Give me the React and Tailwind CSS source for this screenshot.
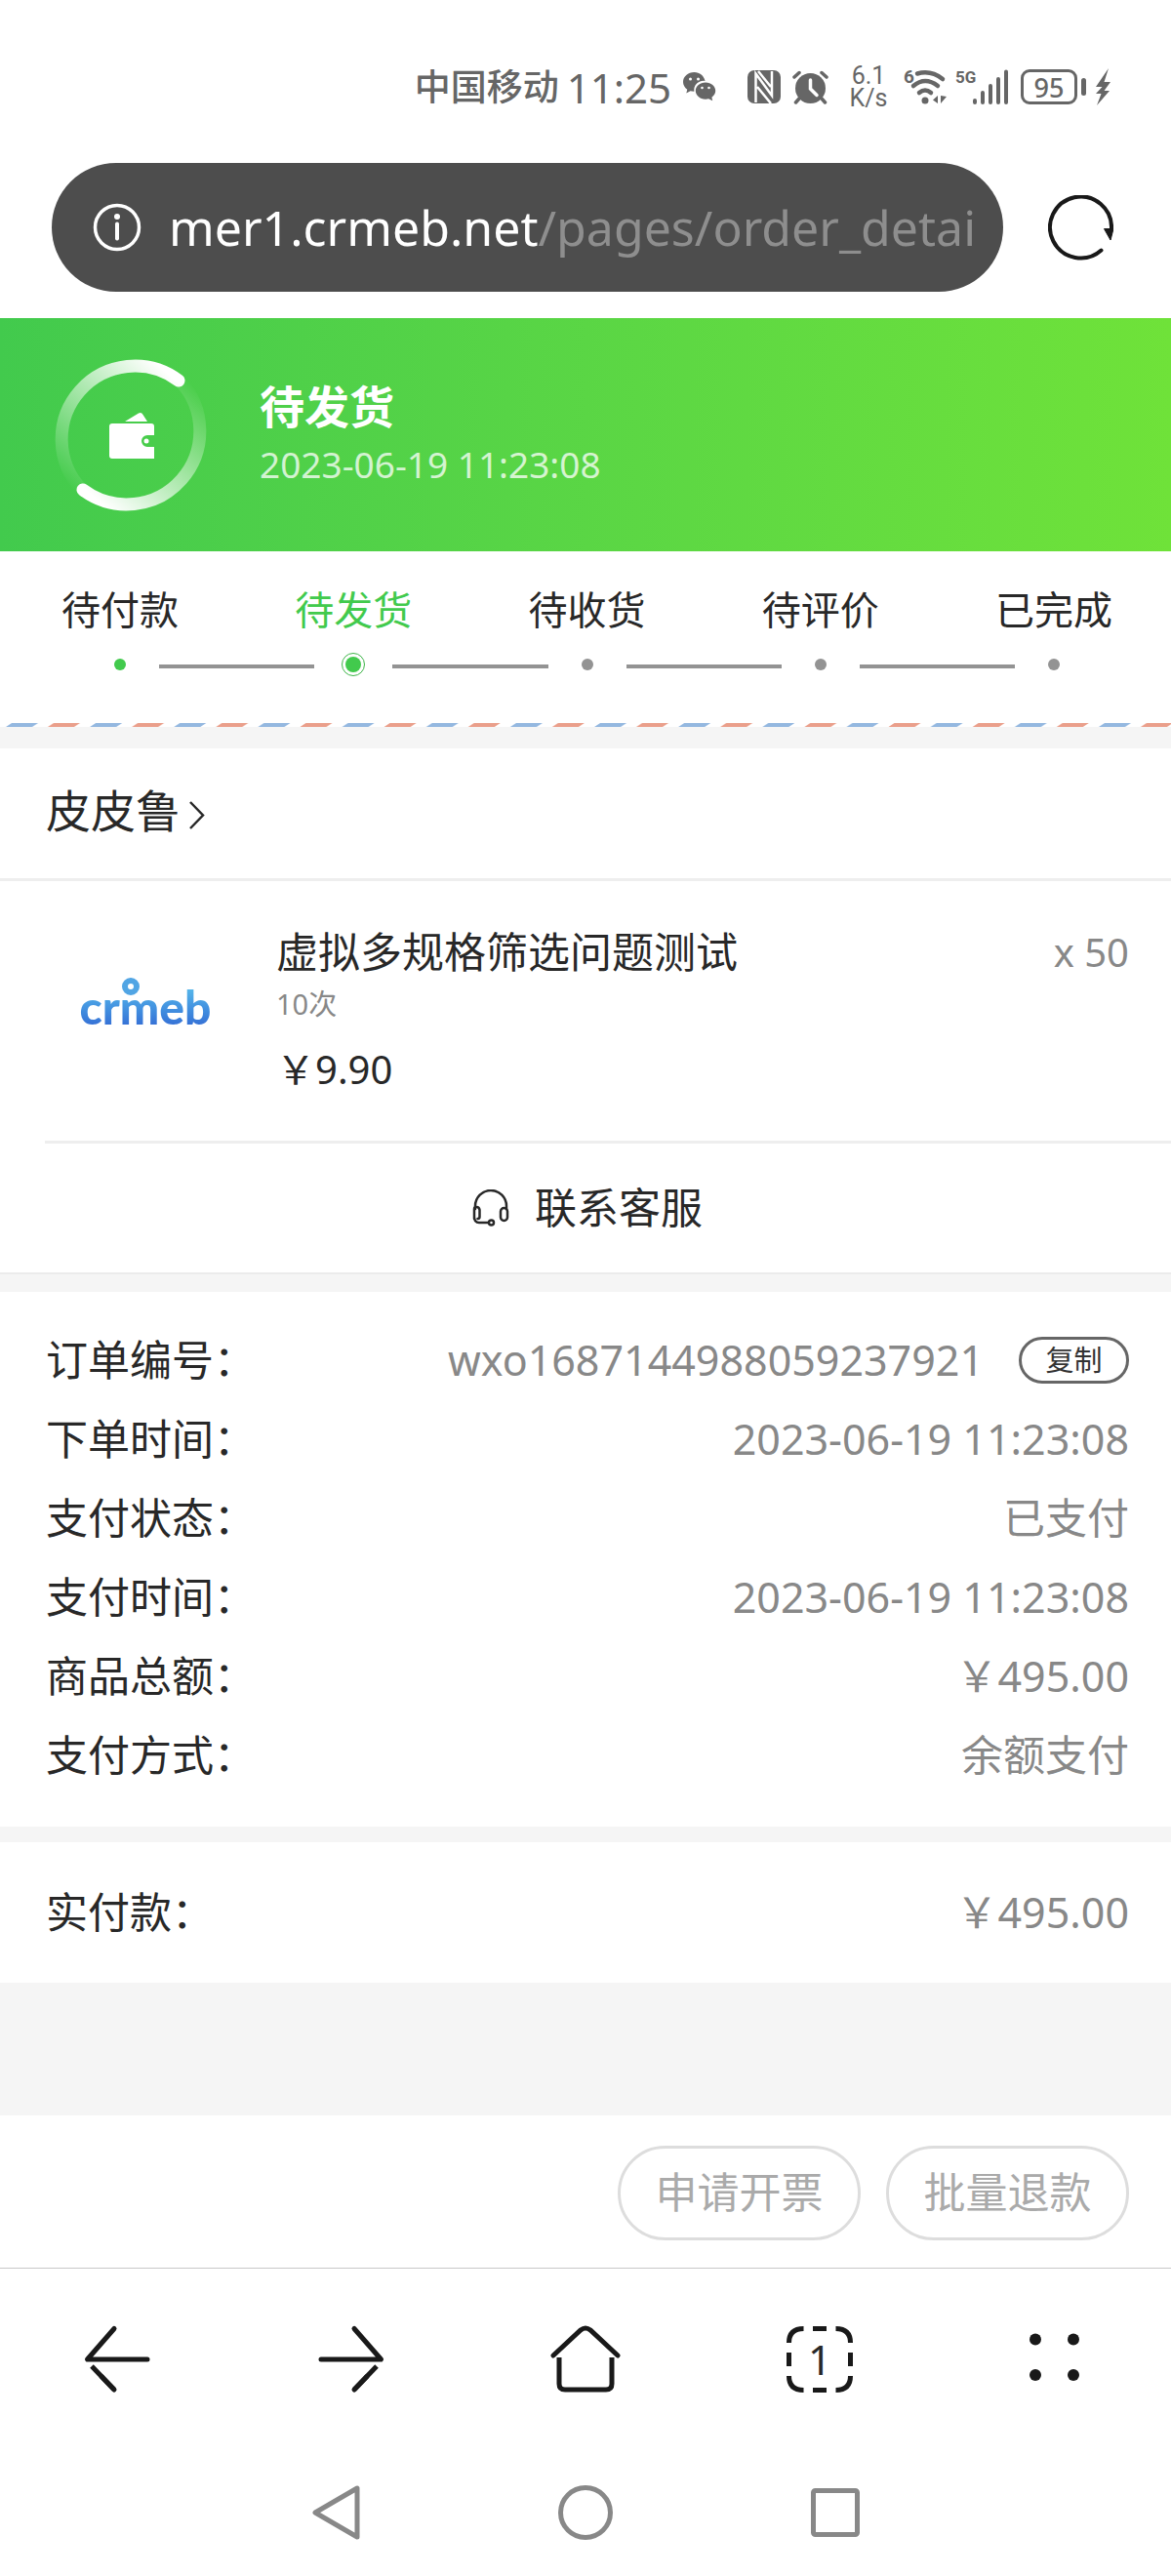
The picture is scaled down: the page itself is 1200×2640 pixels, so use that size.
const steps = [
  { label: '待付款', state: 'done' },
  { label: '待发货', state: 'active' },
  { label: '待收货', state: 'todo' },
  { label: '待评价', state: 'todo' },
  { label: '已完成', state: 'todo' },
];

const details = [
  { label: '订单编号：', value: 'wxo1687144988059237921', copy: true },
  { label: '下单时间：', value: '2023-06-19 11:23:08' },
  { label: '支付状态：', value: '已支付' },
  { label: '支付时间：', value: '2023-06-19 11:23:08' },
  { label: '商品总额：', value: '￥495.00' },
  { label: '支付方式：', value: '余额支付' },
];

function StatusBar() {
  return (
    <div className="flex items-center justify-end h-[70px] mt-[54px] mb-[43px] pr-[61px] text-[#666] fill-current">
      <span className="text-[37px] font-medium mr-2">中国移动</span>
      <span className="text-[42px] mr-3">11:25</span>
      <svg width="34" height="30" viewBox="0 0 34 30" className="mr-8">
        <path d="M11.500 0C5 0 0 4.500 0 10c0 3.200 1.700 5.900 4.300 7.700L3.300 21.500l4.200-2.200c1.200.3 2.400.5 3.800.5A9.500 9.500 0 0 1 22.500 9C21.500 3.800 17 0 11.500 0Z" />
        <path d="M23 10.500c-5.700 0-10.200 3.800-10.200 8.600s4.500 8.600 10.200 8.600c1.100 0 2.200-.2 3.200-.4l4 2-.8-3.500c2.300-1.600 3.800-4 3.800-6.700 0-4.800-4.500-8.600-10.200-8.600Z" />
        <g fill="#fff">
          <circle cx="7.500" cy="7" r="1.500" />
          <circle cx="15.500" cy="7" r="1.500" />
          <circle cx="19.500" cy="16" r="1.300" />
          <circle cx="26.500" cy="16" r="1.300" />
        </g>
      </svg>
      <svg width="34" height="34" viewBox="0 0 34 34" className="mr-3">
        <rect width="34" height="34" rx="7" />
        <path d="M8.500 33V3.500L25 26V1M11 1l13 16M10 17l14 17" fill="none" stroke="#fff" strokeWidth="2.500" />
      </svg>
      <svg width="37" height="35" viewBox="0 0 37 35" className="mr-[21px]">
        <circle cx="18.500" cy="18.500" r="15.500" />
        <path d="M2 7l5-4.500M35 7l-5-4.500M7 29l-3.500 4M30 29l3.500 4" fill="none" stroke="currentColor" strokeWidth="3.500" strokeLinecap="round" />
        <path d="M18.500 10v9l6.500 6.500" fill="none" stroke="#fff" strokeWidth="3.500" strokeLinecap="round" />
      </svg>
      <span className="flex flex-col w-10 mr-4 font-['Roboto',sans-serif] text-[25px] leading-[23px] text-center">
        <span>6.1</span>
        <span>K/s</span>
      </span>
      <svg width="44" height="52" viewBox="0 -8 44 52" className="mr-[9px]">
        <text x="0" y="14" fontSize="19" fontWeight="700" fontFamily="Roboto, sans-serif">6</text>
        <g fill="none" stroke="currentColor" strokeWidth="4.500" strokeLinecap="round">
          <path d="M14 4.500q14-4 26 5.500" />
          <path d="M10 17q12-10 25 0" />
          <path d="M16 24q6-5 12 0" />
        </g>
        <circle cx="22" cy="32" r="3.500" />
        <path d="M35 27v8l-5-3.500zM38 27v8l6-7z" />
      </svg>
      <svg width="56" height="52" viewBox="0 -8 56 52" className="mr-[11px]">
        <text x="0" y="14" fontSize="17" fontWeight="700" fontFamily="Roboto, sans-serif">5G</text>
        <path d="M20 32v2M28 24v10M36 17v17M44 10v24M52 2.500V34" fill="none" stroke="currentColor" strokeWidth="4" strokeLinecap="round" />
      </svg>
      <span className="flex items-center justify-center w-[58px] h-9 mr-1 border-[3px] border-current rounded-[9px] text-[27px] font-medium leading-none">
        95
      </span>
      <span className="w-[5px] h-[18px] mr-[9px] rounded-full bg-[#666]" />
      <svg width="17" height="38" viewBox="0 0 17 38">
        <path d="M14 0 1 19h6.500L1 26h5.500L2 38 15 23H9.500L16 14H9.500Z" />
      </svg>
    </div>
  );
}

function AddressBar() {
  return (
    <div className="flex items-center gap-[46px] pl-[53px] pr-[59px] mb-[27px]">
      <button className="flex flex-1 items-center h-[132px] pl-[42px] rounded-full bg-[#4d4d4d] text-[50px] text-white whitespace-nowrap overflow-hidden">
        <svg width="50" height="50" viewBox="0 0 50 50" className="shrink-0 mr-7">
          <circle cx="25" cy="25" r="22.500" fill="none" stroke="#fff" strokeWidth="3.500" />
          <circle cx="25" cy="14" r="3" fill="#fff" />
          <path d="M25 21.500v15" stroke="#fff" strokeWidth="4" strokeLinecap="round" />
        </svg>
        <span>mer1.crmeb.net</span>
        <span className="text-[#8e8e8e]">/pages/order_detai</span>
      </button>
      <button aria-label="刷新">
        <svg width="67" height="67" viewBox="0 0 67 67">
          <path d="M54.500 56.500A31.500 31.500 0 1 1 65 34.500" fill="none" stroke="#191919" strokeWidth="4" strokeLinecap="round" />
          <path d="M57.500 34.500H67L64 46Z" fill="#191919" stroke="#191919" strokeLinejoin="round" />
        </svg>
      </button>
    </div>
  );
}

function StatusBanner() {
  return (
    <header className="flex items-center gap-[50px] pl-[52px] h-[239px] bg-linear-to-r from-[#42ca4d] to-[#6fe239] text-white">
      <svg width="164" height="164" viewBox="0 0 164 164" fill="none">
        <defs>
          <linearGradient id="arcTop" gradientUnits="userSpaceOnUse" x1="110" y1="10" x2="8" y2="125">
            <stop offset="0" stopColor="#fff" />
            <stop offset="1" stopColor="#fff" stopOpacity="0" />
          </linearGradient>
          <linearGradient id="arcBottom" gradientUnits="userSpaceOnUse" x1="54" y1="154" x2="156" y2="39">
            <stop offset="0" stopColor="#fff" />
            <stop offset="1" stopColor="#fff" stopOpacity="0" />
          </linearGradient>
        </defs>
        <path d="M131 26A75 75 0 0 0 32 138" stroke="url(#arcTop)" strokeWidth="13" strokeLinecap="round" />
        <path d="M33 138A75 75 0 0 0 132 26" stroke="url(#arcBottom)" strokeWidth="13" strokeLinecap="round" />
        <g fill="#fff">
          <path d="M76 68 90 59.500q3-1.500 4.500 1.500L99 68Z" />
          <path d="M63 70h40q3 0 3 3v9h-7a6 6 0 0 0 0 12h7v12H63q-3 0-3-3V73q0-3 3-3Z" />
          <circle cx="98" cy="88" r="2.500" />
        </g>
      </svg>
      <div className="leading-[60px]">
        <h1 className="text-[46px] font-bold">待发货</h1>
        <p className="text-[37px] text-white/75">2023-06-19 11:23:08</p>
      </div>
    </header>
  );
}

function StepDot({ state }) {
  if (state === 'active') {
    return (
      <span className="flex items-center justify-center size-6 rounded-full border border-[#3fb54a]">
        <span className="size-4 rounded-full bg-[#42ca4d]" />
      </span>
    );
  }
  return (
    <span className="flex items-center justify-center size-6">
      <span className={state === 'done' ? 'size-3 rounded-full bg-[#42ca4d]' : 'size-3 rounded-full bg-[#939393]'} />
    </span>
  );
}

function Steps() {
  return (
    <section>
      <ol className="flex pt-8 pb-12 pl-[83px] pr-20">
        {steps.map((step, i) => (
          <li key={step.label} className={i > 0 ? 'flex flex-1 items-end' : 'flex items-end'}>
            {i > 0 && <span className="flex-1 h-1 mb-2 bg-[#939393]" />}
            <div className="flex flex-col items-center gap-4 w-20">
              <span className={step.state === 'active' ? 'text-[40px] leading-[56px] whitespace-nowrap text-[#42ca4d]' : 'text-[40px] leading-[56px] whitespace-nowrap'}>
                {step.label}
              </span>
              <StepDot state={step.state} />
            </div>
          </li>
        ))}
      </ol>
      {/* airmail stripe */}
      <svg width="100%" height="4" className="block">
        <defs>
          <pattern id="airmail" width="86.150" height="4" patternUnits="userSpaceOnUse">
            <path d="M12 0h27l-6 4H6Z" fill="#94b8e0" />
            <path d="M55 0h27l-6 4H49Z" fill="#ea9f8b" />
          </pattern>
        </defs>
        <rect width="100%" height="4" fill="url(#airmail)" />
      </svg>
    </section>
  );
}

function Product() {
  return (
    <section className="border-b-2 border-[#ebebeb]">
      <a href="#store" className="flex items-center gap-2 px-[47px] pt-[29px] pb-[35px] border-b-[3px] border-[#eee] text-[46px] leading-[69px]">
        皮皮鲁
        <svg width="18" height="30" viewBox="0 0 18 30" className="mt-2">
          <path d="M2 2l13 13.500L2 29" fill="none" stroke="#282828" strokeWidth="2.500" />
        </svg>
      </a>
      <div className="ml-[46px] py-[30px] pr-[43px] flex items-center border-b-[3px] border-[#eee]">
        <div className="flex items-center justify-center shrink-0 size-[206px] mr-[31px] pb-2">
          <div className="relative">
            <span className="block font-['Lato',sans-serif] text-[48px] font-black leading-[60px] bg-linear-to-b from-[#55b5ea] from-20% to-[#3672d6] to-80% bg-clip-text text-transparent">
              crmeb
            </span>
            <span className="absolute left-[43px] top-0 size-[18px] rounded-full border-[6px] border-[#51a5e4]" />
          </div>
        </div>
        <div className="flex-1">
          <div className="flex justify-between leading-[60px]">
            <h2 className="text-[43px]">虚拟多规格筛选问题测试</h2>
            <span className="text-[40px] text-[#888]">x 50</span>
          </div>
          <p className="text-[29px] leading-[46px] text-[#888]">10次</p>
          <p className="mt-[14px] text-[40px] leading-[60px]">￥9.90</p>
        </div>
      </div>
      <button className="flex w-full items-center justify-center gap-[26px] py-8 pl-1 text-[43px] leading-[68px]">
        <svg width="38" height="38" viewBox="0 0 38 38" fill="none" stroke="#282828" strokeWidth="2.500" strokeLinecap="round">
          <path d="M3 20V17a16 16 0 0 1 32 0v3" />
          <path d="M2 30V20q0-2 2.500-2t3 3v7q0 2-2 2M2 28q0 6 5 6h9" />
          <rect x="29" y="19" width="7" height="13" rx="3.500" />
          <circle cx="19.500" cy="34" r="2.500" />
        </svg>
        联系客服
      </button>
    </section>
  );
}

function OrderInfo() {
  return (
    <dl className="pl-[47px] pr-[43px] pt-[29px] pb-[33px] text-[43px] leading-[81px]">
      {details.map((row) => (
        <div key={row.label} className="flex justify-between">
          <dt>{row.label}</dt>
          <dd className="flex items-center text-[#888]">
            {row.value}
            {row.copy && (
              <button className="w-[113px] h-12 ml-9 border-[3px] border-[#666] rounded-full text-[29px] leading-10 text-[#333]">
                复制
              </button>
            )}
          </dd>
        </div>
      ))}
    </dl>
  );
}

function BrowserToolbar() {
  return (
    <nav className="grid grid-cols-5 justify-items-center py-[57px] border-t border-[#c8c8c8]">
      <button aria-label="后退">
        <svg width="72" height="72" viewBox="0 0 72 72" fill="none" stroke="#191919" strokeWidth="5" strokeLinecap="round">
          <path d="M33 4.500 5.500 36H67" strokeLinejoin="round" />
          <path d="M10 43 33 67" strokeLinecap="butt" />
          <path d="M20 53.500 33 67" />
        </svg>
      </button>
      <button aria-label="前进">
        <svg width="72" height="72" viewBox="0 0 72 72" fill="none" stroke="#191919" strokeWidth="5" strokeLinecap="round">
          <path d="M39 4.500l27.500 31.500H5" strokeLinejoin="round" />
          <path d="M62 43 39 67" strokeLinecap="butt" />
          <path d="M52 53.500 39 67" />
        </svg>
      </button>
      <button aria-label="主页">
        <svg width="72" height="72" viewBox="0 0 72 72" fill="none" stroke="#191919" strokeWidth="5">
          <path d="M3 32 31 6q5-4 10 0l28 26" strokeLinecap="round" />
          <path d="M9 34v27q0 6 6 6h42q6 0 6-6V34" />
        </svg>
      </button>
      <button className="relative size-[72px] text-[42px] leading-[70px]">
        <svg width="72" height="72" viewBox="0 0 72 72" fill="none" stroke="#191919" strokeWidth="5" className="absolute inset-0">
          <path d="M4.500 19q0-14.500 15-14.500M52.500 4.500q15 0 15 14.500M67.500 53q0 14.500-15 14.500M19.500 67.500q-15 0-15-14.500" />
          <path d="M29 4.500h14M29 67.500h14M4.500 29v14M67.500 29v14" />
        </svg>
        1
      </button>
      <button aria-label="菜单">
        <svg width="72" height="72" viewBox="0 0 72 72" fill="#191919">
          <circle cx="17" cy="15.500" r="6" />
          <circle cx="56" cy="15.500" r="6" />
          <circle cx="17" cy="52" r="6" />
          <circle cx="56" cy="52" r="6" />
        </svg>
      </button>
    </nav>
  );
}

function SystemNav() {
  return (
    <div className="grid grid-cols-3 justify-items-center px-[18%] py-9">
      <button aria-label="返回">
        <svg width="56" height="56" viewBox="0 0 56 56" fill="none" stroke="#888" strokeWidth="5" strokeLinejoin="round">
          <path d="M50 3v50L7 28Z" />
        </svg>
      </button>
      <button aria-label="桌面">
        <svg width="56" height="56" viewBox="0 0 56 56" fill="none" stroke="#888" strokeWidth="5">
          <circle cx="28" cy="28" r="25.500" />
        </svg>
      </button>
      <button aria-label="最近任务">
        <svg width="56" height="56" viewBox="0 0 56 56" fill="none" stroke="#888" strokeWidth="5">
          <rect x="5.500" y="5.500" width="45" height="45" rx="2" />
        </svg>
      </button>
    </div>
  );
}

export default function App() {
  return (
    <div className="flow-root bg-white text-[#282828] font-['Noto_Sans','Noto_Sans_CJK_SC',sans-serif]">
      <StatusBar />
      <AddressBar />
      <main className="bg-[#f5f5f5] *:bg-white">
        <StatusBanner />
        <Steps />
        <div className="mt-[22px]">
          <Product />
        </div>
        <div className="mt-[18px]">
          <OrderInfo />
        </div>
        <dl className="flex justify-between mt-4 mb-[136px] pl-[47px] pr-[43px] py-8 text-[43px] leading-[80px]">
          <dt>实付款：</dt>
          <dd className="text-[#888]">￥495.00</dd>
        </dl>
        <div className="flex justify-end gap-[26px] pt-[31px] pb-7 pr-[43px] text-[43px] text-[#aaa]">
          <button className="w-[249px] h-[97px] border-[3px] border-[#ddd] rounded-full">申请开票</button>
          <button className="w-[249px] h-[97px] border-[3px] border-[#ddd] rounded-full">批量退款</button>
        </div>
      </main>
      <BrowserToolbar />
      <SystemNav />
    </div>
  );
}
